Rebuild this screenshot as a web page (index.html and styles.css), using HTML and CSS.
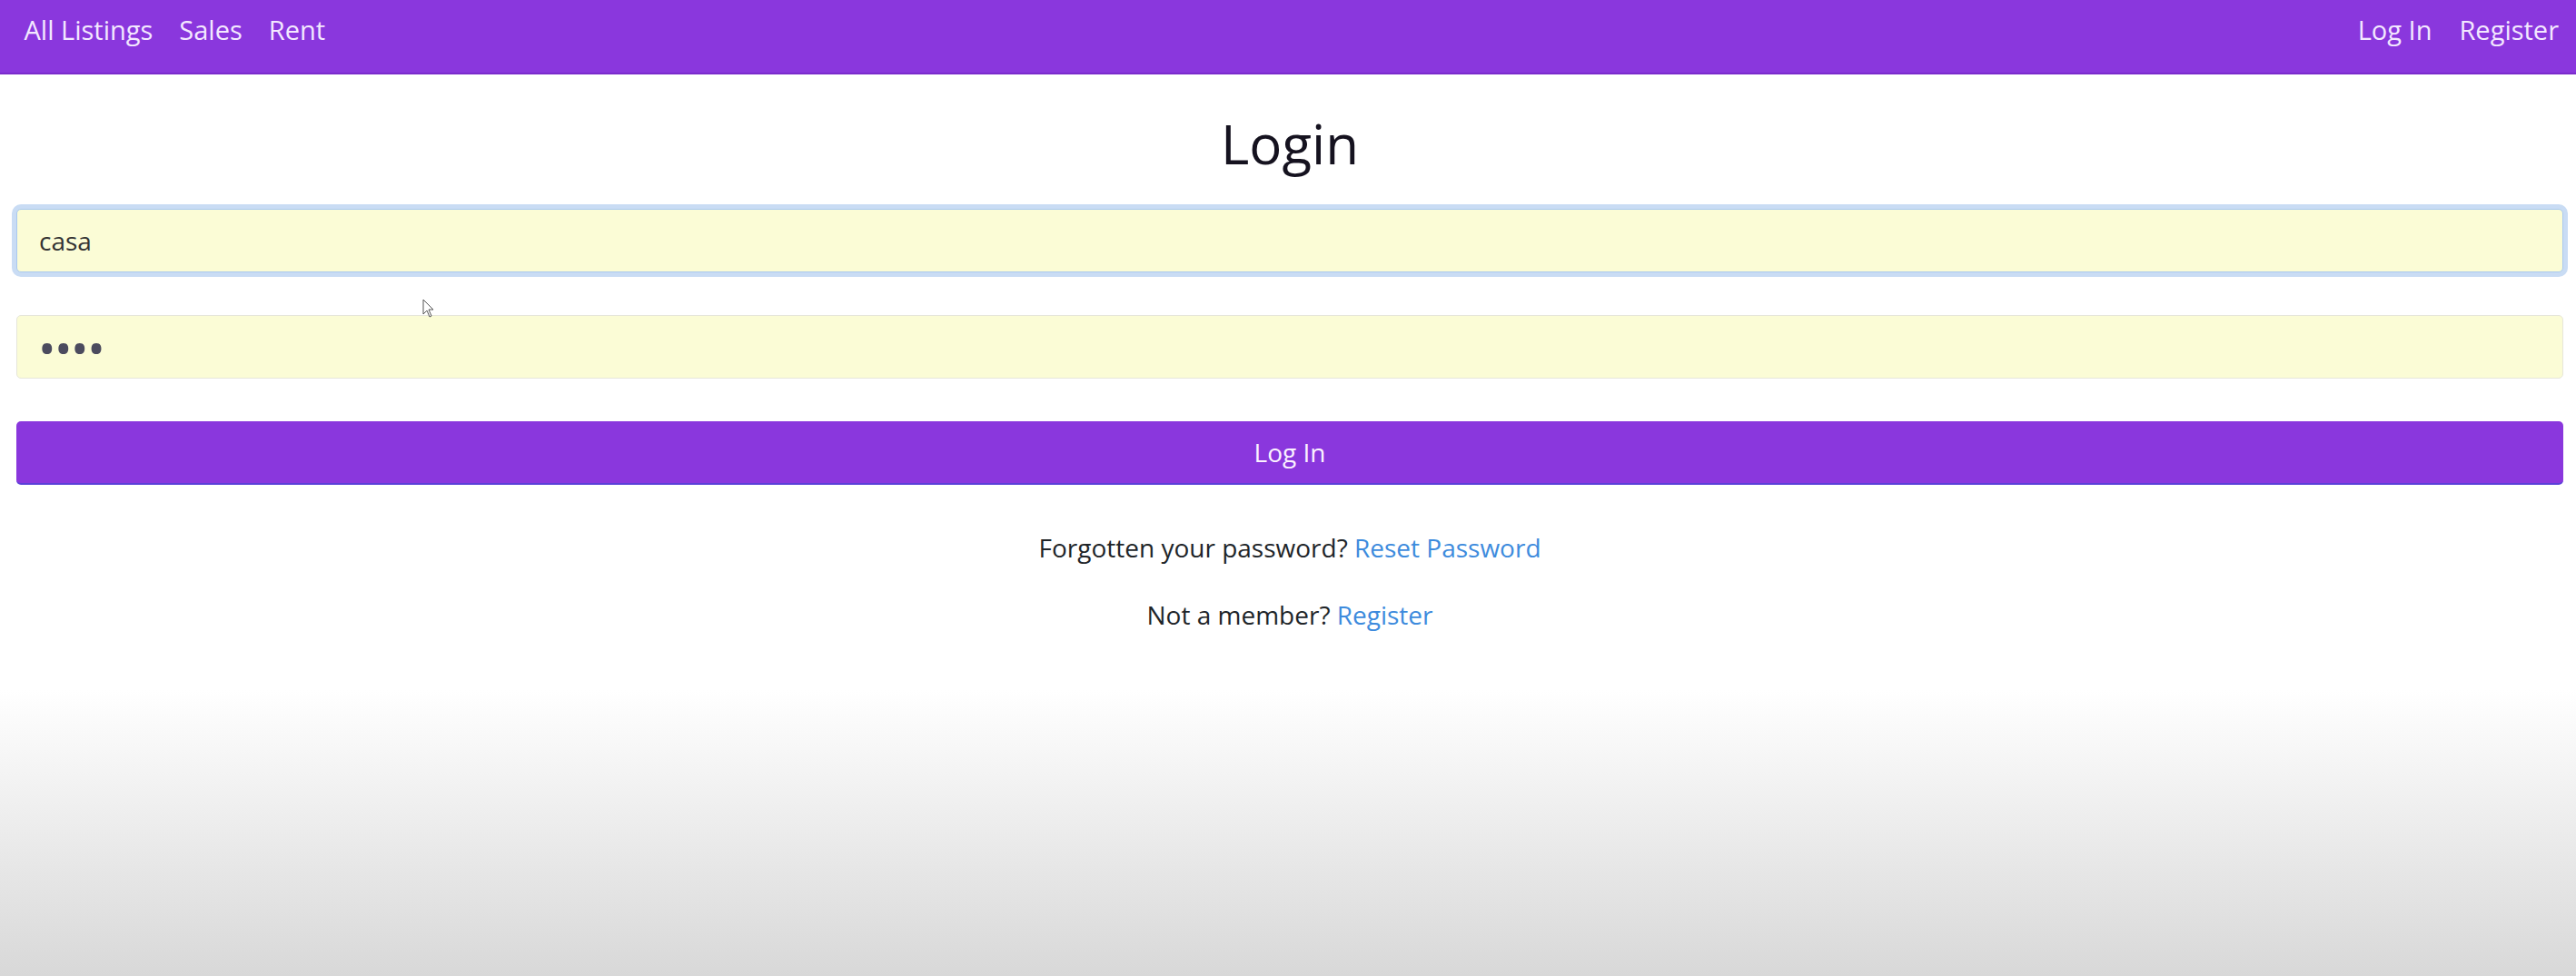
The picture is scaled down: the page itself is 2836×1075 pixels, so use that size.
FILE: index.html
```html
<!DOCTYPE html>
<html lang="en">
<head>
<meta charset="utf-8">
<title>Login</title>
<link rel="stylesheet" href="styles.css">
</head>
<body>
<nav class="navbar">
  <ul class="nav-left">
    <li><a href="#">All Listings</a></li>
    <li><a href="#">Sales</a></li>
    <li><a href="#">Rent</a></li>
  </ul>
  <ul class="nav-right">
    <li><a href="#">Log In</a></li>
    <li><a href="#">Register</a></li>
  </ul>
</nav>
<main class="container">
  <h1 class="title">Login</h1>
  <form class="login-form">
    <input class="field field-focus" type="text" value="casa">
    <input class="field field-pass" type="password" value="abcd">
    <button class="btn" type="button">Log In</button>
  </form>
  <p class="help">Forgotten your password? <a href="#">Reset Password</a></p>
  <p class="help">Not a member? <a href="#">Register</a></p>
</main>
<svg class="cursor" width="14" height="22" viewBox="0 0 14 22"><path d="M1 1 L1 17 L5 13 L8 20 L10 19 L7 12 L12 12 Z" fill="#fff" stroke="#555" stroke-width="1"/></svg>
</body>
</html>
```
FILE: styles.css
```css
* { box-sizing: border-box; }
html, body { height: 100%; }
body {
  margin: 0;
  font-family: "Open Sans", "Noto Sans", sans-serif;
  color: #212529;
  background: linear-gradient(to bottom, #ffffff 0px, #ffffff 760px, #d8d8d8 1075px);
  position: relative;
  overflow: hidden;
}
.navbar {
  display: flex;
  justify-content: space-between;
  background: #8a37dd;
  border-bottom: 2px solid #7a2ccc;
  height: 82px;
  padding: 13px 4px 0 12px;
}
.navbar ul {
  display: flex;
  list-style: none;
  margin: 0;
  padding: 0;
}
.navbar a {
  display: block;
  color: #f3e8ff;
  text-decoration: none;
  font-size: 29px;
  line-height: 40px;
  padding: 0 15px;
}
.nav-left a { padding: 0 14.5px; }
.container {
  padding: 0 14px 0 18px;
  display: flex;
  flex-direction: column;
}
.title {
  text-align: center;
  font-weight: 400;
  font-size: 60px;
  line-height: 72px;
  margin: 40px 0 36px;
  color: #15121f;
}
.login-form {
  display: flex;
  flex-direction: column;
  gap: 47px;
}
.field {
  height: 70px;
  width: 100%;
  font-family: inherit;
  font-size: 28px;
  color: #333;
  padding: 0 24px;
  background: #fbfcd6;
  border: 1px solid #e6e6da;
  border-radius: 5px;
  outline: none;
}
.field-pass {
  color: #4b4b5e;
  letter-spacing: -1.5px;
  font-size: 52px;
  padding-left: 23px;
}
.field-focus {
  border-color: #a9c9ef;
  box-shadow: 0 0 0 5px #c9dcf4;
}
.btn {
  height: 70px;
  width: 100%;
  background: #8a37dd;
  border: none;
  border-bottom: 2px solid #5a40d8;
  border-radius: 5px;
  color: #fbf2ff;
  font-family: inherit;
  font-size: 28px;
}
.help {
  text-align: center;
  font-size: 28px;
  line-height: 40px;
  margin: 0;
}
.help:first-of-type { margin-top: 49px; }
.help + .help { margin-top: 34px; }
.help a {
  color: #3d8bdd;
  text-decoration: none;
}
.cursor {
  position: absolute;
  left: 465px;
  top: 329px;
}
```
